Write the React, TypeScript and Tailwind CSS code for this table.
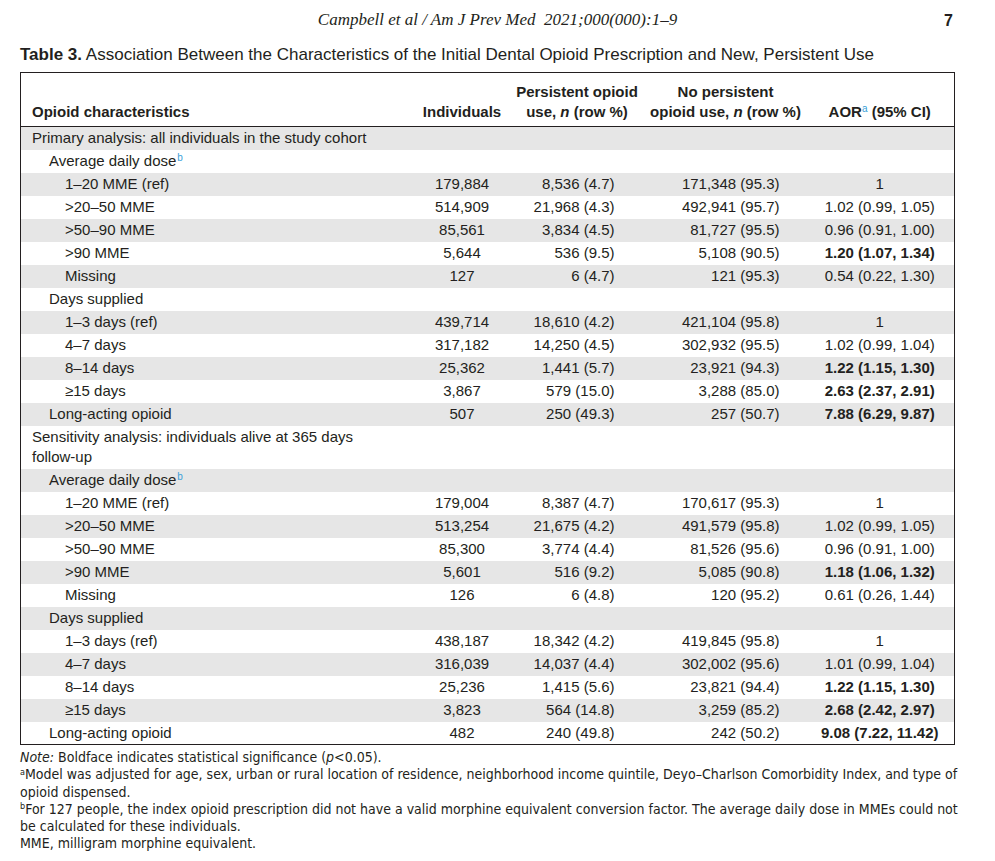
import React from 'react';

type Row = {
  label: string;
  level: 0 | 1 | 2;
  sup?: string;
  ind?: string;
  per?: string;
  no?: string;
  aor?: string;
  bold?: boolean;
  twoLine?: string;
};

const primary: Row[] = [
  { label: 'Primary analysis: all individuals in the study cohort', level: 0 },
  { label: 'Average daily dose', level: 1, sup: 'b' },
  { label: '1–20 MME (ref)', level: 2, ind: '179,884', per: '8,536 (4.7)', no: '171,348 (95.3)', aor: '1' },
  { label: '>20–50 MME', level: 2, ind: '514,909', per: '21,968 (4.3)', no: '492,941 (95.7)', aor: '1.02 (0.99, 1.05)' },
  { label: '>50–90 MME', level: 2, ind: '85,561', per: '3,834 (4.5)', no: '81,727 (95.5)', aor: '0.96 (0.91, 1.00)' },
  { label: '>90 MME', level: 2, ind: '5,644', per: '536 (9.5)', no: '5,108 (90.5)', aor: '1.20 (1.07, 1.34)', bold: true },
  { label: 'Missing', level: 2, ind: '127', per: '6 (4.7)', no: '121 (95.3)', aor: '0.54 (0.22, 1.30)' },
  { label: 'Days supplied', level: 1 },
  { label: '1–3 days (ref)', level: 2, ind: '439,714', per: '18,610 (4.2)', no: '421,104 (95.8)', aor: '1' },
  { label: '4–7 days', level: 2, ind: '317,182', per: '14,250 (4.5)', no: '302,932 (95.5)', aor: '1.02 (0.99, 1.04)' },
  { label: '8–14 days', level: 2, ind: '25,362', per: '1,441 (5.7)', no: '23,921 (94.3)', aor: '1.22 (1.15, 1.30)', bold: true },
  { label: '≥15 days', level: 2, ind: '3,867', per: '579 (15.0)', no: '3,288 (85.0)', aor: '2.63 (2.37, 2.91)', bold: true },
  { label: 'Long-acting opioid', level: 1, ind: '507', per: '250 (49.3)', no: '257 (50.7)', aor: '7.88 (6.29, 9.87)', bold: true },
];

const sensitivity: Row[] = [
  { label: 'Sensitivity analysis: individuals alive at 365 days', twoLine: 'follow-up', level: 0 },
  { label: 'Average daily dose', level: 1, sup: 'b' },
  { label: '1–20 MME (ref)', level: 2, ind: '179,004', per: '8,387 (4.7)', no: '170,617 (95.3)', aor: '1' },
  { label: '>20–50 MME', level: 2, ind: '513,254', per: '21,675 (4.2)', no: '491,579 (95.8)', aor: '1.02 (0.99, 1.05)' },
  { label: '>50–90 MME', level: 2, ind: '85,300', per: '3,774 (4.4)', no: '81,526 (95.6)', aor: '0.96 (0.91, 1.00)' },
  { label: '>90 MME', level: 2, ind: '5,601', per: '516 (9.2)', no: '5,085 (90.8)', aor: '1.18 (1.06, 1.32)', bold: true },
  { label: 'Missing', level: 2, ind: '126', per: '6 (4.8)', no: '120 (95.2)', aor: '0.61 (0.26, 1.44)' },
  { label: 'Days supplied', level: 1 },
  { label: '1–3 days (ref)', level: 2, ind: '438,187', per: '18,342 (4.2)', no: '419,845 (95.8)', aor: '1' },
  { label: '4–7 days', level: 2, ind: '316,039', per: '14,037 (4.4)', no: '302,002 (95.6)', aor: '1.01 (0.99, 1.04)' },
  { label: '8–14 days', level: 2, ind: '25,236', per: '1,415 (5.6)', no: '23,821 (94.4)', aor: '1.22 (1.15, 1.30)', bold: true },
  { label: '≥15 days', level: 2, ind: '3,823', per: '564 (14.8)', no: '3,259 (85.2)', aor: '2.68 (2.42, 2.97)', bold: true },
  { label: 'Long-acting opioid', level: 1, ind: '482', per: '240 (49.8)', no: '242 (50.2)', aor: '9.08 (7.22, 11.42)', bold: true },
];

const rows = [...primary, ...sensitivity];

const indent = ['pl-[11px]', 'pl-[28px]', 'pl-[44px]'];

const TableRow: React.FC<{ row: Row; index: number }> = ({ row, index }) => {
  const bg = index % 2 === 0 ? 'bg-[#e6e6e6]' : 'bg-white';
  return (
    <tr className={bg}>
      <td className={`${indent[row.level]} ${row.twoLine ? 'h-[43px] leading-[20px]' : 'h-[23px]'} align-middle`}>
        {row.label}
        {row.sup && <sup className="text-[10px] text-[#3aa0d8] ml-[1px]">{row.sup}</sup>}
        {row.twoLine && (
          <>
            <br />
            {row.twoLine}
          </>
        )}
      </td>
      <td className="text-center">{row.ind}</td>
      <td className="text-right pr-[31px]">{row.per}</td>
      <td className="text-right pr-[26px]">{row.no}</td>
      <td className={`text-center ${row.bold ? 'font-bold' : ''}`}>{row.aor}</td>
    </tr>
  );
};

export default function App() {
  return (
    <div className="w-[995px] h-[861px] bg-white text-[#231f20] font-['Liberation_Sans',Arial,sans-serif] overflow-hidden">
      {/* running head */}
      <div className="relative h-[40px]">
        <div className="pt-[8px] text-center font-['Liberation_Serif',serif] italic text-[17px] leading-[24px]">
          Campbell et al / Am J Prev Med&nbsp; 2021;000(000):1–9
        </div>
        <div className="absolute right-[42px] top-[9px] font-bold text-[16px]">7</div>
      </div>

      <div className="pl-[20px] text-[17px] leading-[20px] pt-[5px]">
        <span className="font-bold">Table 3.</span> Association Between the Characteristics of the Initial Dental Opioid
        Prescription and New, Persistent Use
      </div>

      <div className="pl-[20px] pt-[7px]">
        <table className="w-[934px] border border-[#231f20] border-collapse text-[15px] table-fixed">
          <colgroup>
            <col className="w-[395px]" />
            <col className="w-[93px]" />
            <col className="w-[137px]" />
            <col className="w-[160px]" />
            <col className="w-[149px]" />
          </colgroup>
          <thead>
            <tr className="border-b border-[#231f20] font-bold leading-[20px]">
              <th className="h-[54px] align-bottom text-left pl-[11px] pb-[4px]">Opioid characteristics</th>
              <th className="align-bottom text-center pb-[4px]">Individuals</th>
              <th className="align-bottom text-center pb-[4px]">
                Persistent opioid
                <br />
                use, <i>n</i> (row %)
              </th>
              <th className="align-bottom text-center pb-[4px]">
                No persistent
                <br />
                opioid use, <i>n</i> (row %)
              </th>
              <th className="align-bottom text-center pb-[4px]">
                AOR<sup className="text-[10px] text-[#3aa0d8] font-normal">a</sup> (95% CI)
              </th>
            </tr>
          </thead>
          <tbody>
            {rows.map((row, i) => (
              <TableRow key={i} row={row} index={i} />
            ))}
          </tbody>
        </table>
      </div>

      <div className="pl-[20px] pt-[4px] text-[14px] leading-[17.3px] font-['Liberation_Sans_Narrow','DejaVu_Sans_Condensed',sans-serif] whitespace-nowrap">
        <div>
          <i>Note:</i> Boldface indicates statistical significance (<i>p</i>&lt;0.05).
        </div>
        <div>
          <sup className="text-[9px]">a</sup>Model was adjusted for age, sex, urban or rural location of residence,
          neighborhood income quintile, Deyo–Charlson Comorbidity Index, and type of
          <br />
          opioid dispensed.
        </div>
        <div>
          <sup className="text-[9px]">b</sup>For 127 people, the index opioid prescription did not have a valid morphine
          equivalent conversion factor. The average daily dose in MMEs could not
          <br />
          be calculated for these individuals.
        </div>
        <div>MME, milligram morphine equivalent.</div>
      </div>
    </div>
  );
}
